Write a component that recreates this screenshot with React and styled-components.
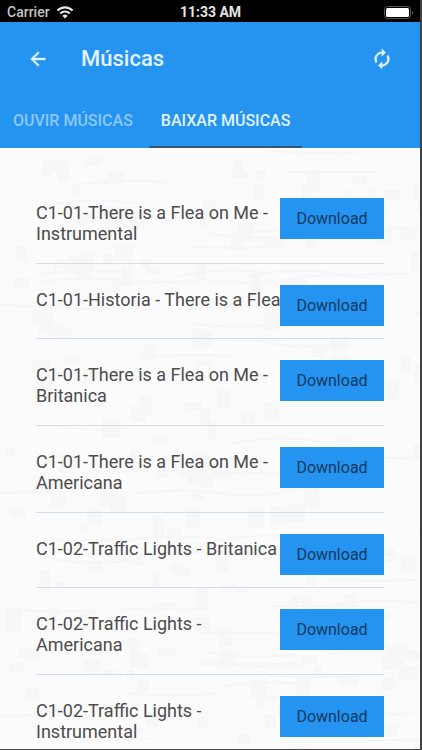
import React, { useState } from "react";
import styled, { createGlobalStyle } from "styled-components";
import { MdArrowBack, MdAutorenew } from "react-icons/md";

const GlobalStyle = createGlobalStyle`
  *, *::before, *::after { box-sizing: border-box; }
  body {
    margin: 0;
    background: #fbfbfb;
    font-family: Roboto, "Liberation Sans", sans-serif;
    color: #4c4c4c;
  }
  button { font-family: inherit; border: 0; margin: 0; cursor: pointer; }
`;

const Screen = styled.div`
  height: 100vh;
  display: flex;
  flex-direction: column;
  overflow: hidden;
  border-right: 2px solid #3f4245;
  border-bottom: 1px solid #4b4b4d;
`;

const StatusBar = styled.div`
  flex: none;
  height: 22px;
  margin-right: -2px;
  padding: 2px 8px 0 7px;
  display: grid;
  grid-template-columns: 1fr auto 1fr;
  align-items: center;
  background: #000;
  color: #e4e4e4;
  font-size: 14px;
  line-height: 20px;
`;

const Carrier = styled.div`
  display: flex;
  align-items: center;
  gap: 6px;
  color: #c4c4c4;
  font-weight: 500;
`;

const Clock = styled.time`
  font-weight: 700;
`;

const Battery = styled.div`
  display: flex;
  justify-content: flex-end;
`;

const Header = styled.header`
  flex: none;
  background: #2593f0;
  color: #e2f2ff;
`;

const Toolbar = styled.div`
  height: 73px;
  padding: 0 22px;
  display: flex;
  align-items: center;
`;

const IconButton = styled.button`
  width: 32px;
  height: 32px;
  padding: 0;
  display: grid;
  place-items: center;
  background: none;
  color: inherit;

  path:not([fill="none"]) {
    stroke: currentColor;
    stroke-width: 0.5;
  }
`;

const Title = styled.h1`
  flex: 1;
  margin: 0 0 0 27px;
  font-size: 22px;
  line-height: 28px;
  font-weight: 500;
`;

const Tabs = styled.div`
  display: flex;
  gap: 4px;
  padding-left: 1px;
`;

const Tab = styled.button`
  height: 53px;
  padding: 0 12px;
  background: none;
  color: ${(p) => (p.$active ? "#e2f2ff" : "#8dc8fa")};
  border-bottom: 2px solid ${(p) => (p.$active ? "#365677" : "transparent")};
  font-size: 16px;
  font-weight: 500;
  white-space: nowrap;
`;

const Content = styled.main`
  position: relative;
  flex: 1;
  min-height: 0;
  overflow: hidden auto;
  scrollbar-width: none;
  background: #fbfbfb;
`;

const Texture = styled.svg`
  position: absolute;
  inset: 0;
  width: 100%;
  height: 100%;
`;

const SongList = styled.ul`
  position: relative;
  list-style: none;
  margin: 0;
  padding: 29px 36px 0;
`;

const SongRow = styled.li`
  display: flex;
  align-items: flex-start;
  padding: 21px 0 12px;
  border-bottom: 1px solid #d3deea;
`;

const SongName = styled.span`
  flex: 1;
  min-width: 0;
  margin: 4px -3px 7px 0;
  font-size: 18px;
  line-height: 21px;
`;

const DownloadButton = styled.button`
  flex: none;
  width: 104px;
  height: 41px;
  padding: 0;
  background: #2593f0;
  color: #0f3a60;
  font-size: 16px;
`;

const songs = [
  "C1-01-There is a Flea on Me - Instrumental",
  "C1-01-Historia - There is a Flea",
  "C1-01-There is a Flea on Me - Britanica",
  "C1-01-There is a Flea on Me - Americana",
  "C1-02-Traffic Lights - Britanica",
  "C1-02-Traffic Lights - Americana",
  "C1-02-Traffic Lights - Instrumental",
];

const tabs = ["OUVIR MÚSICAS", "BAIXAR MÚSICAS"];

// Pseudo-random but stable blocks and strokes for the paper texture.
const noise = (n) => {
  const v = Math.sin(n * 127.1 + 11.7) * 43758.5453;
  return v - Math.floor(v);
};
const blocks = Array.from({ length: 200 }, (_, i) => ({
  x: Math.floor(noise(i) * 420),
  y: Math.floor(noise(i + 400) * 600),
  w: 8 + Math.floor(noise(i + 800) * 12),
  h: 5 + Math.floor(noise(i + 1200) * 16),
}));
const strokes = Array.from({ length: 60 }, (_, i) => {
  const x = Math.floor(noise(i + 2000) * 400) - 30;
  const y = Math.floor(noise(i + 2400) * 600);
  const bend = Math.floor(noise(i + 2800) * 20) - 10;
  return `M${x} ${y}q40 ${bend} 90 ${Math.floor(bend / 3)}`;
});

function PaperTexture() {
  return (
    <Texture aria-hidden="true">
      {blocks.map((b, i) => (
        <rect key={i} x={b.x} y={b.y} width={b.w} height={b.h} fill="#f7f7f7" />
      ))}
      {strokes.map((d, i) => (
        <path key={i} d={d} fill="none" stroke="#f6f6f6" strokeWidth="2" />
      ))}
    </Texture>
  );
}

function WifiIcon() {
  return (
    <svg width="18" height="13" viewBox="0 0 16 12" fill="none" stroke="#e6e6e6" strokeWidth="2" aria-hidden="true">
      <path d="M1 4.2C5 .2 11 .2 15 4.2" />
      <path d="M3.6 7C6.2 4.5 9.8 4.5 12.4 7" />
      <path d="M8 11.5 5.5 8.9Q8 6.9 10.5 8.9Z" fill="#e6e6e6" stroke="none" />
    </svg>
  );
}

function BatteryIcon() {
  return (
    <svg width="30" height="13" viewBox="0 0 30 13" aria-hidden="true">
      <rect x=".5" y=".5" width="26" height="12" rx="3" fill="none" stroke="#555" />
      <rect x="2" y="2" width="23" height="9" rx="1.5" fill="#fff" />
      <path d="M28 4.5q1.5 2 0 4z" fill="#888" />
    </svg>
  );
}

export default function App() {
  const [active, setActive] = useState(1);
  return (
    <Screen>
      <GlobalStyle />
      <StatusBar>
        <Carrier>
          Carrier
          <WifiIcon />
        </Carrier>
        <Clock>11:33 AM</Clock>
        <Battery>
          <BatteryIcon />
        </Battery>
      </StatusBar>
      <Header>
        <Toolbar>
          <IconButton aria-label="Voltar">
            <MdArrowBack size={22} />
          </IconButton>
          <Title>Músicas</Title>
          <IconButton aria-label="Atualizar">
            <MdAutorenew size={22} />
          </IconButton>
        </Toolbar>
        <Tabs role="tablist">
          {tabs.map((label, i) => (
            <Tab key={label} role="tab" aria-selected={active === i} $active={active === i} onClick={() => setActive(i)}>
              {label}
            </Tab>
          ))}
        </Tabs>
      </Header>
      <Content>
        <PaperTexture />
        <SongList>
          {songs.map((name) => (
            <SongRow key={name}>
              <SongName>{name}</SongName>
              <DownloadButton aria-label={`Download ${name}`}>Download</DownloadButton>
            </SongRow>
          ))}
        </SongList>
      </Content>
    </Screen>
  );
}
